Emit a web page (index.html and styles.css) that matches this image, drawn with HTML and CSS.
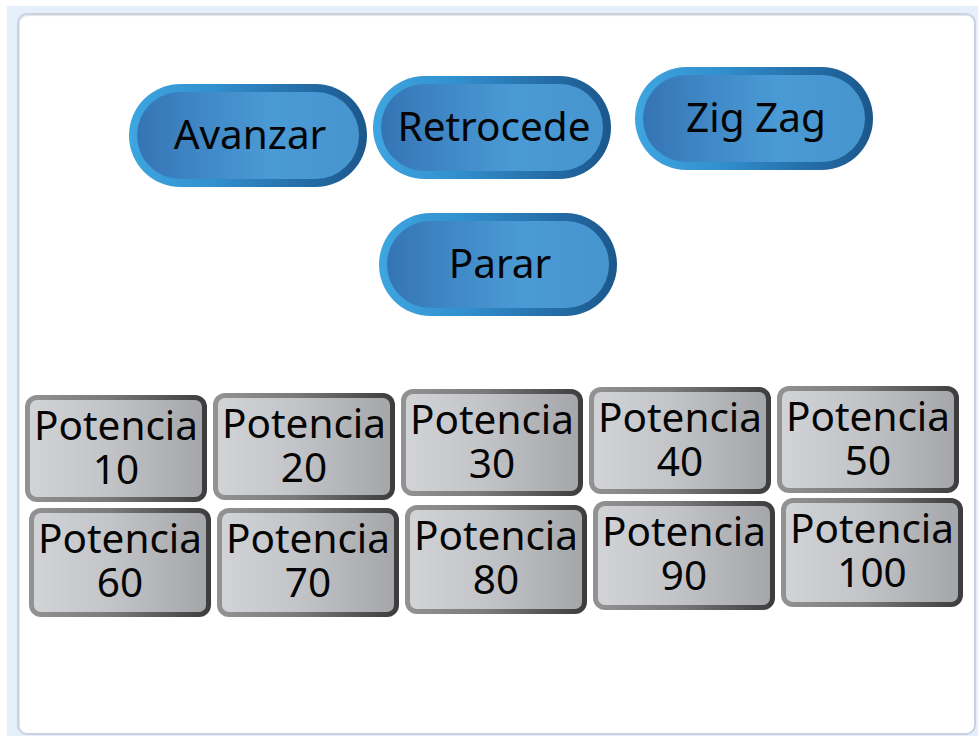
FILE: index.html
```html
<!DOCTYPE html>
<html lang="es">
<head>
<meta charset="utf-8">
<title>Control</title>
<link rel="stylesheet" href="styles.css">
</head>
<body>
<div class="frame">
  <main class="card">
    <div class="pill-row pill-row--top">
      <button class="pill pill--avanzar mt-17">Avanzar</button>
      <button class="pill pill--retro mt-9">Retrocede</button>
      <button class="pill pill--zig mt-0">Zig Zag</button>
    </div>
    <div class="pill-row pill-row--stop">
      <button class="pill pill--parar">Parar</button>
    </div>
    <div class="pot-row pot-row--first">
      <button class="pot mt-9">Potencia<br>10</button>
      <button class="pot mt-7">Potencia<br>20</button>
      <button class="pot mt-3">Potencia<br>30</button>
      <button class="pot mt-1">Potencia<br>40</button>
      <button class="pot mt-0">Potencia<br>50</button>
    </div>
    <div class="pot-row pot-row--second">
      <button class="pot pot--tall mt-10">Potencia<br>60</button>
      <button class="pot pot--tall mt-10">Potencia<br>70</button>
      <button class="pot pot--tall mt-7">Potencia<br>80</button>
      <button class="pot pot--tall mt-3">Potencia<br>90</button>
      <button class="pot pot--tall mt-0">Potencia<br>100</button>
    </div>
  </main>
</div>
</body>
</html>
```
FILE: styles.css
```css
html, body {
  margin: 0;
  padding: 0;
  background: #ffffff;
}

.frame {
  margin: 6px 0 0 7px;
  height: 730px;
  box-sizing: border-box;
  padding: 7px 2px 0 10px;
  background: #e5eefb;
  overflow: hidden;
}

.card {
  box-sizing: border-box;
  height: 722px;
  background: #ffffff;
  border: 2px solid #cad2de;
  border-radius: 10px;
  box-shadow: inset 1px 1px 1px rgba(170, 182, 200, 0.35);
}

button {
  margin: 0;
  font-family: "Noto Sans", "Open Sans", sans-serif;
  color: #050505;
  cursor: pointer;
}

.pill-row {
  display: flex;
  align-items: flex-start;
}

.pill-row--top {
  margin-top: 52px;
  padding-left: 110px;
}

.pill-row--stop {
  margin-top: 26px;
  padding-left: 360px;
}

.pill {
  box-sizing: border-box;
  width: 238px;
  height: 103px;
  border: 8px solid transparent;
  border-radius: 52px;
  padding: 0 0 3px 4px;
  background:
    linear-gradient(90deg, #3574b4 0%, #4088c7 30%, #4a9ad5 60%, #4795cf 100%) padding-box,
    linear-gradient(90deg, #3ea6e0 0%, #3290ce 35%, #2670ab 70%, #1b578b 100%) border-box;
  font-size: 40.5px;
  line-height: 1.2;
  display: flex;
  align-items: center;
  justify-content: center;
  white-space: nowrap;
}

.pill--retro { margin-left: 6px; }
.pill--zig { margin-left: 24px; }

.pot-row {
  display: flex;
  align-items: flex-start;
  gap: 6px;
}

.pot-row--first {
  margin-top: 70px;
  padding-left: 6px;
}

.pot-row--second {
  margin-top: -4px;
  padding-left: 10px;
}

.pot {
  box-sizing: border-box;
  width: 182px;
  height: 107px;
  border: 5px solid transparent;
  border-radius: 12px;
  padding: 3px 0 0;
  background:
    linear-gradient(90deg, #d2d3d6 0%, #c3c4c7 45%, #a5a6aa 100%) padding-box,
    linear-gradient(90deg, #939393 0%, #7a7a7a 45%, #3c3c3c 100%) border-box;
  font-size: 40.5px;
  line-height: 44px;
  text-align: center;
  white-space: nowrap;
  display: flex;
  flex-direction: column;
  justify-content: flex-start;
  align-items: center;
}

.pot--tall { height: 109px; }

.mt-0 { margin-top: 0; }
.mt-1 { margin-top: 1px; }
.mt-3 { margin-top: 3px; }
.mt-7 { margin-top: 7px; }
.mt-9 { margin-top: 9px; }
.mt-10 { margin-top: 10px; }
.mt-17 { margin-top: 17px; }
```
